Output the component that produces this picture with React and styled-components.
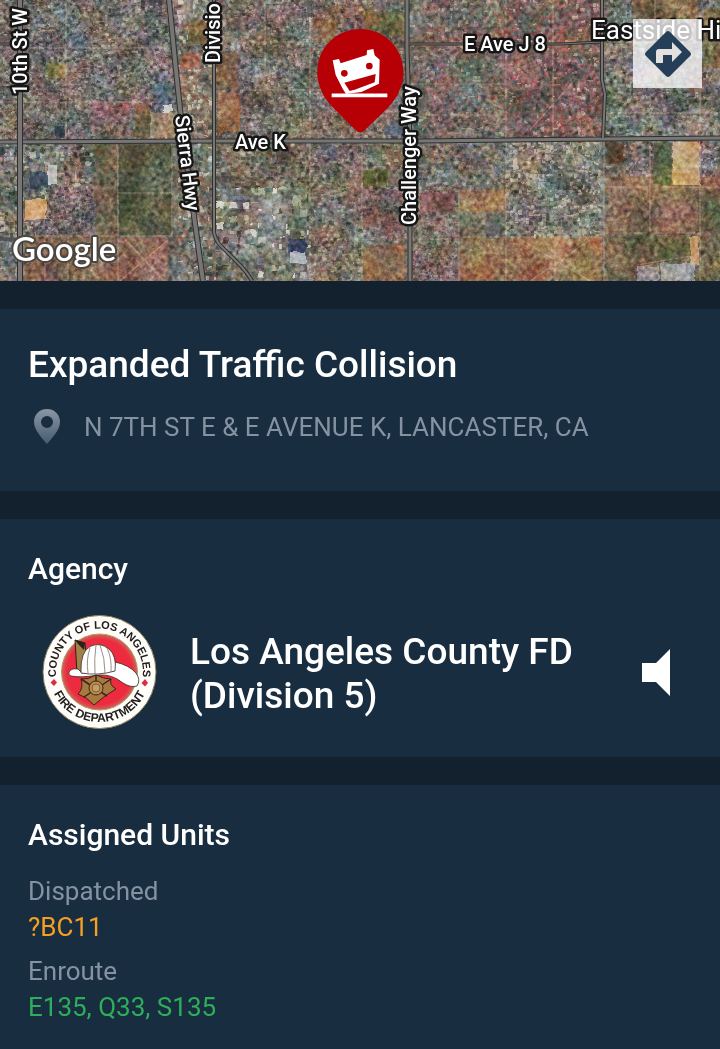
import React from "react";
import styled, { createGlobalStyle } from "styled-components";

const GlobalStyle = createGlobalStyle`
  * { box-sizing: border-box; }
  body { margin: 0; background: #12212d; color: #fff; font-family: Roboto, "Liberation Sans", sans-serif; }
`;

const Page = styled.main`display: flex; flex-direction: column; gap: 28px; min-height: 100vh;`;
const MapBox = styled.section`position: relative; height: 281px; overflow: hidden;`;
const MapSvg = styled.svg`display: block; width: 100%; height: 100%;`;
const Grain = styled.rect`mix-blend-mode: overlay;`;
const RoadLabel = styled.text`
  font: ${(p) => (p.$large ? "400 26px" : "500 20px")} Roboto, sans-serif;
  fill: #fff;
  stroke: #161616;
  stroke-width: 5px;
  stroke-linejoin: round;
  paint-order: stroke;
`;
const Wordmark = styled(RoadLabel)`font: 600 33px Lato, sans-serif; stroke: #4b4640; stroke-width: 4px;`;
const DirectionsButton = styled.button`
  position: absolute;
  top: 19px;
  right: 18px;
  width: 69px;
  height: 69px;
  padding: 0;
  border: none;
  background: rgba(255, 255, 255, 0.75);
  display: flex;
  align-items: center;
  justify-content: center;
  cursor: pointer;
`;

const Section = styled.section`
  background: #182d40;
  padding: 32px 28px ${(p) => p.$bottom || 28}px;
  ${(p) => p.$grow && "flex: 1;"}
`;
const Title = styled.h1`margin: 0 0 20px; font-size: 37px; line-height: 48px; font-weight: 500;`;
const Heading = styled.h2`margin: 0 0 ${(p) => p.$gap}px; font-size: 30px; line-height: 36px; font-weight: 500;`;
const Address = styled.p`
  margin: 0;
  display: flex;
  align-items: center;
  gap: 20px;
  color: #8492a1;
  font-size: 26px;
  line-height: 36px;
`;
const AgencyRow = styled.div`display: flex; align-items: center; padding: 0 20px 0 14px;`;
const AgencyName = styled.p`
  flex: 1;
  margin: 0 32px;
  padding-top: 4px;
  font-size: 37px;
  line-height: 44px;
  font-weight: 500;
`;
const SoundButton = styled.button`border: none; padding: 0; background: none; display: flex; cursor: pointer;`;
const Units = styled.dl`margin: 0; font-size: 26px; line-height: 36px;`;
const UnitGroup = styled.div`& + & { margin-top: 8px; }`;
const Status = styled.dt`color: #8492a1;`;
const UnitList = styled.dd`margin: 0; color: ${(p) => p.$color};`;

// open ground and large lots: x, y, w, h, colour
const lots = [
  [118, 143, 55, 93, "#5b6049"],
  [95, 143, 22, 93, "#776651"],
  [134, 104, 16, 34, "#86694e"],
  [150, 112, 32, 26, "#a19079"],
  [25, 236, 92, 45, "#8d7058"],
  [118, 238, 50, 43, "#94705e"],
  [25, 199, 21, 21, "#dcae7c"],
  [30, 172, 18, 16, "#44555f"],
  [48, 165, 9, 20, "#cbcbc4"],
  [55, 126, 10, 12, "#3f5059"],
  [156, 84, 19, 22, "#6a7b86"],
  [164, 105, 8, 7, "#dfdfd8"],
  [48, 63, 17, 15, "#857952"],
  [189, 22, 17, 22, "#846a45"],
  [181, 54, 19, 14, "#ab7763"],
  [216, 52, 23, 38, "#876d54"],
  [218, 92, 22, 40, "#a47a56"],
  [313, 20, 24, 22, "#8b7056"],
  [365, 12, 40, 24, "#7b6f4b"],
  [363, 170, 13, 17, "#5a6234"],
  [378, 170, 9, 15, "#5e6838"],
  [385, 120, 17, 15, "#63717c"],
  [363, 245, 42, 36, "#957457"],
  [289, 239, 17, 14, "#475a7a"],
  [290, 252, 16, 11, "#c6cdd0"],
  [420, 192, 34, 21, "#90696a"],
  [460, 190, 46, 22, "#9e7a5b"],
  [460, 238, 142, 43, "#a07c5b"],
  [606, 177, 114, 58, "#897058"],
  [606, 236, 114, 45, "#776d50"],
  [654, 142, 18, 42, "#606948"],
  [673, 142, 27, 44, "#d0b083"],
  [606, 143, 18, 20, "#7c5c44"],
  [632, 0, 67, 20, "#83704f"],
  [702, 8, 18, 60, "#83724c"],
  [690, 237, 9, 28, "#ceaa7c"],
  [636, 266, 23, 15, "#a0a3a6"],
  [661, 263, 34, 18, "#a9a9a7"],
  [698, 188, 22, 44, "#68654c"],
];

// built-up districts: x, y, w, h, base, roof and tree tones, cell size
const districts = [
  [0, 0, 178, 142, "#7a7673", ["#5a5855", "#918e8b", "#84776f", "#535650", "#a09d95"], 3],
  [92, 102, 37, 34, "#86696a", ["#a37477", "#624e4d", "#94837f"], 3],
  [0, 142, 94, 139, "#7e7b74", ["#4f5657", "#acaea9", "#6f7c86", "#b6a18a", "#4b5348"], 5],
  [46, 190, 48, 45, "#7a6e70", ["#594d54", "#998d8d", "#50534f"], 3],
  [178, 0, 38, 142, "#8a8175", ["#b3b2a7", "#606b68", "#8a6b5a", "#c3bbae"], 5],
  [178, 142, 40, 139, "#807b72", ["#4e5852", "#b8bab5", "#9a7562", "#7a8182"], 5],
  [216, 0, 98, 142, "#79746d", ["#585851", "#958f87", "#867260", "#646a65", "#a59d94"], 3],
  [314, 0, 93, 142, "#7d746c", ["#585b51", "#987e76", "#6b7070", "#a39487"], 3],
  [410, 0, 96, 142, "#7d726b", ["#5a5b51", "#9a6f6b", "#697271", "#a59a8a"], 4],
  [505, 0, 98, 142, "#806864", ["#595b52", "#ac6e70", "#686f6e", "#b49f93", "#8b5658"], 4],
  [606, 0, 114, 142, "#7b7b74", ["#535a51", "#9b918a", "#827486", "#9da398"], 4],
  [216, 142, 97, 50, "#7a7469", ["#515247", "#999689", "#846853", "#625752"], 5],
  [216, 188, 94, 93, "#82847c", ["#d3d4ce", "#5b6a6a", "#8b9599", "#505348", "#afb0a0"], 7],
  [310, 142, 97, 139, "#7a7469", ["#4e5449", "#999389", "#876d69", "#9e9c86"], 4],
  [363, 188, 45, 51, "#826f6d", ["#9a7475", "#5e5952", "#968b80"], 3],
  [410, 142, 96, 50, "#73746c", ["#4f564e", "#948f8a", "#767f87", "#9c8774"], 4],
  [410, 188, 50, 93, "#80736c", ["#58574e", "#a2807b", "#94938b"], 3],
  [506, 142, 97, 96, "#84857b", ["#5a6156", "#a8a49a", "#696f6e", "#bbb4a5"], 4],
  [606, 142, 48, 35, "#82756c", ["#55524c", "#b09a91", "#6d7675"], 4],
  [699, 142, 21, 45, "#887873", ["#5b5352", "#b8a79c", "#708087"], 4],
];

const random = (seed) => () => {
  seed = (seed * 1664525 + 1013904223) % 4294967296;
  return seed / 4294967296;
};

const blocks = districts.map(([x, y, w, h, base, tones, cell], n) => {
  const next = random(n * 977 + 13);
  const paths = tones.map(() => "");
  for (let cy = y; cy < y + h - 2; cy += cell) {
    for (let cx = x; cx < x + w - 2; cx += cell) {
      if (next() < 0.3) continue;
      const i = Math.floor(next() * tones.length);
      const cw = Math.min(1 + next() * cell, x + w - cx);
      const ch = Math.min(1 + next() * (cell - 1), y + h - cy);
      paths[i] += `M${cx} ${cy}h${cw.toFixed(1)}v${ch.toFixed(1)}h-${cw.toFixed(1)}z`;
    }
  }
  return { x, y, w, h, base, tones, paths };
});

const streets =
  "M0 48H170M0 102H175M118 142V281M66 0V140M118 236H25M172 142V236M118 193H172M95 236H205M68 237V281M45 237V281M310 0V281M216 42H313M310 49H405M265 0V100M240 90H400M362 142V281M410 84H505M506 0V281M459 190V281M460 237H603M604 142V281M606 187H720M606 233H700M650 144V232M700 88V281M553 0V142M411 115H505M530 130L575 80M655 0V18M637 265L691 256M712 48L720 39M410 239H460M555 238V281M520 239L590 281M590 240L530 281M606 113H720M120 281L168 240M126 240L164 281";

const roads = [
  ["M0 142L200 141H420L600 139L720 138", 3],
  ["M20 0V281", 4],
  ["M169 0C174 48 178 96 184 142S198 246 203 281", 4],
  ["M214 0V232Q215 239 220 245L238 263Q247 272 252 281", 2],
  ["M407 0V50L410 142V281", 3],
  ["M409 44H560L602 42", 1],
  ["M602 0V80L605 94L603 138", 2],
  ["M0 239H20M0 44H14", 1],
];

const MapTerrain = () => (
  <>
    <defs>
      <filter id="grain" x="0" y="0" width="100%" height="100%" colorInterpolationFilters="sRGB">
        <feTurbulence type="fractalNoise" baseFrequency="0.22" numOctaves="3" seed="8" />
        <feColorMatrix values="1 .6 .6 0 -.65  .7 .9 .6 0 -.65  .7 .6 .9 0 -.65  0 0 0 0 1" />
      </filter>
      <filter id="shade" x="0" y="0" width="100%" height="100%" colorInterpolationFilters="sRGB">
        <feTurbulence type="fractalNoise" baseFrequency="0.035" numOctaves="3" seed="21" />
        <feColorMatrix values="1.1 .3 .3 0 -.37  .5 .8 .4 0 -.39  .3 .5 .9 0 -.4  0 0 0 0 1" />
      </filter>
      <filter id="soften" x="0" y="0" width="100%" height="100%" colorInterpolationFilters="sRGB">
        <feTurbulence type="fractalNoise" baseFrequency="0.12" numOctaves="2" seed="4" />
        <feDisplacementMap in="SourceGraphic" scale="5" xChannelSelector="R" yChannelSelector="G" />
        <feGaussianBlur stdDeviation=".5" />
      </filter>
    </defs>
    <rect width="720" height="281" fill="#7d776d" />
    <g filter="url(#soften)">
      {blocks.map((b, n) => (
        <g key={n}>
          <rect x={b.x} y={b.y} width={b.w} height={b.h} fill={b.base} />
          {b.paths.map((d, i) => <path key={i} d={d} fill={b.tones[i]} />)}
        </g>
      ))}
      {lots.map(([x, y, w, h, fill], n) => (
        <rect key={n} x={x} y={y} width={w} height={h} fill={fill} opacity=".9" />
      ))}
    </g>
    <Grain width="720" height="281" filter="url(#shade)" opacity=".4" />
    <path d={streets} fill="none" stroke="#c8b299" strokeWidth="1.2" opacity=".5" />
    <Grain width="720" height="281" filter="url(#grain)" opacity=".45" />
    {roads.map(([d, w], n) => (
      <g key={n} fill="none">
        <path d={d} stroke="#303030" strokeWidth={w + 2} />
        <path d={d} stroke="#777674" strokeWidth={w} />
      </g>
    ))}
  </>
);

const IncidentPin = () => (
  <g transform="translate(310 20) scale(.33333)">
    <path d="M151 27C80 27 22 83 22 155C22 197 40 232 68 262L133 326Q151 348 169 326L235 262C263 232 280 197 280 155C280 83 222 27 151 27Z" fill="#b70005" />
    <path d="M68 121L87 117L92 130L170 105L171 91L190 87L194 106L209 119L207 191L154 216L108 222L98 206L77 165Z" fill="#fff" />
    <path d="M103 188L197 162L194 187L138 208L119 213Z" fill="#b70005" />
    <circle cx="103" cy="160" r="10" fill="#b70005" />
    <circle cx="178" cy="138" r="10" fill="#b70005" />
    <path d="M65 226H232" stroke="#fff" strokeWidth="11" />
  </g>
);

const IncidentMap = () => (
  <MapBox aria-label="Incident map">
    <MapSvg viewBox="0 0 720 281" preserveAspectRatio="xMidYMid slice">
      <MapTerrain />
      <RoadLabel transform="translate(27 95) rotate(-90)">10th St W</RoadLabel>
      <RoadLabel transform="translate(220 63) rotate(-90)">Divisio</RoadLabel>
      <RoadLabel transform="translate(175 116) rotate(83)">Sierra Hwy</RoadLabel>
      <RoadLabel x="235" y="149">Ave K</RoadLabel>
      <RoadLabel transform="translate(416 225) rotate(-90)">Challenger Way</RoadLabel>
      <RoadLabel x="464" y="51">E Ave J 8</RoadLabel>
      <RoadLabel x="591" y="39" $large>Eastside Hi</RoadLabel>
      <Wordmark x="12" y="261">Google</Wordmark>
      <IncidentPin />
    </MapSvg>
    <DirectionsButton aria-label="Directions">
      <svg width="48" height="48" viewBox="0 0 48 48">
        <path d="M22 2Q24 0 26 2L46 22Q48 24 46 26L26 46Q24 48 22 46L2 26Q0 24 2 22Z" fill="#243f57" />
        <path d="M12 33V22Q12 19 15 19H28V12L38 22L28 32V25H19V33Z" fill="#e3e1df" />
      </svg>
    </DirectionsButton>
  </MapBox>
);

const PlaceIcon = () => (
  <svg width="36" height="36" viewBox="0 0 36 36" aria-hidden="true">
    <defs>
      <linearGradient id="place" x1="0" y1="0" x2="0" y2="1">
        <stop offset="0" stopColor="#8997a5" />
        <stop offset="1" stopColor="#465b70" />
      </linearGradient>
    </defs>
    <path fillRule="evenodd" fill="url(#place)" d="M19 0C11 0 6 6 6 13C6 21 14 29 19 35C24 29 32 21 32 13C32 6 27 0 19 0ZM19 7A6 6 0 1 1 19 19A6 6 0 0 1 19 7Z" />
  </svg>
);

const SealText = styled.text`
  font: bold ${(p) => p.$size}px "Liberation Sans", sans-serif;
  fill: #24201e;
  text-anchor: middle;
`;

const AgencySeal = () => (
  <svg width="116" height="114" viewBox="12 15 116 114" role="img" aria-label="County of Los Angeles Fire Department">
    <defs>
      <path id="sealTop" d="M28 85A43.5 43.5 0 1 1 111 85" />
      <path id="sealBottom" d="M18.500 71A51 51 0 0 0 120.500 71" />
      <radialGradient id="sealRed">
        <stop offset=".86" stopColor="#ee2a3e" />
        <stop offset="1" stopColor="#c9685a" />
      </radialGradient>
    </defs>
    <circle cx="69.5" cy="72" r="56.5" fill="#fffdfa" stroke="#8d8058" />
    <circle cx="69.5" cy="72" r="38" fill="url(#sealRed)" stroke="#b49a66" />
    <SealText $size={11}><textPath href="#sealTop" startOffset="50%">COUNTY OF LOS ANGELES</textPath></SealText>
    <SealText $size={12}><textPath href="#sealBottom" startOffset="50%">FIRE DEPARTMENT</textPath></SealText>
    <path d="M24 79L27 82.500L24 86L20.500 82.500ZM115 79L118 83L115 86.500L111.500 83Z" fill="#dc2b42" />
    <path d="M45 40L55 43L56 55L52 73H47Z" fill="#a08148" stroke="#2a2118" strokeWidth="1" />
    <path d="M45 40L55 43L54 50L48 44Z" fill="#2a2118" />
    <path d="M39 72Q41 68 48 69L52 73L84 71L85 62Q99 65 106 73Q111 80 107 86Q101 88 93 83Q82 74 69 75Q50 78 41 76Q38 75 39 72Z" fill="#fff" stroke="#342820" strokeWidth=".8" />
    <path d="M51 73Q50 51 61 46Q70 42 79 49Q87 56 85 71Q68 76 51 73Z" fill="#fff" stroke="#342820" strokeWidth=".8" />
    <path d="M60 48Q56 59 58 73M66 45Q64 58 65 74M70 45Q75 58 75 73M77 48Q82 58 81 72" fill="none" stroke="#82716b" strokeWidth=".8" />
    <g transform="translate(66 88)" fill="#a8793f" stroke="#3a241a">
      <path d="M-15 -9Q-8 -8 0 -13Q8 -9 15 -9Q13 -3 20 1Q9 7 -2 17Q-9 9 -18 6Q-12 0 -15 -9Z" strokeWidth="1" />
      <path d="M-15 -9L11 8M15 -9L-12 9M0 -13V-7" strokeWidth="1.5" />
      <circle r="7" fill="#b98c50" strokeWidth="1" />
      <circle r="4" fill="#c89f63" strokeWidth=".5" />
    </g>
  </svg>
);

const App = () => {
  return (
    <>
      <GlobalStyle />
      <Page>
        <IncidentMap />
        <Section $bottom={46}>
          <Title>Expanded Traffic Collision</Title>
          <Address>
            <PlaceIcon />
            N 7TH ST E &amp; E AVENUE K, LANCASTER, CA
          </Address>
        </Section>
        <Section>
          <Heading $gap={28}>Agency</Heading>
          <AgencyRow>
            <AgencySeal />
            <AgencyName>Los Angeles County FD (Division 5)</AgencyName>
            <SoundButton aria-label="Listen">
              <svg width="30" height="48" viewBox="0 0 30 48"><path d="M0 15H14L28 1V48L14 34H0Z" fill="#fff" /></svg>
            </SoundButton>
          </AgencyRow>
        </Section>
        <Section $grow>
          <Heading $gap={20}>Assigned Units</Heading>
          <Units>
            <UnitGroup>
              <Status>Dispatched</Status>
              <UnitList $color="#f5a021">?BC11</UnitList>
            </UnitGroup>
            <UnitGroup>
              <Status>Enroute</Status>
              <UnitList $color="#2fae5a">E135, Q33, S135</UnitList>
            </UnitGroup>
          </Units>
        </Section>
      </Page>
    </>
  );
};

export default App;
